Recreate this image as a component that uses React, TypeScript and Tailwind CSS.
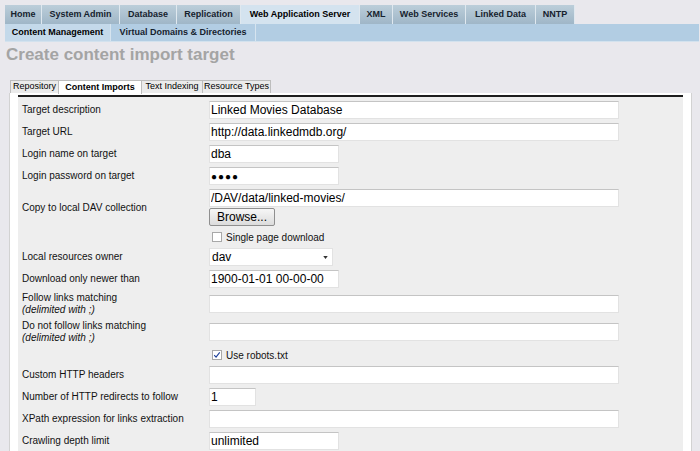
import { ReactNode } from 'react';

// ==========================================
// NAV DATA
// ==========================================

const topTabs = [
  { label: 'Home', w: 'w-[37px]' },
  { label: 'System Admin', w: 'w-[78px]' },
  { label: 'Database', w: 'w-[57px]' },
  { label: 'Replication', w: 'w-[64px]' },
  { label: 'Web Application Server', w: 'w-[119px]', active: true },
  { label: 'XML', w: 'w-[33px]' },
  { label: 'Web Services', w: 'w-[73px]' },
  { label: 'Linked Data', w: 'w-[70px]' },
  { label: 'NNTP', w: 'w-[39px]' },
];

const innerTabs = [
  { label: 'Repository', w: 'w-[49px]' },
  { label: 'Content Imports', w: 'w-[84px]', active: true },
  { label: 'Text Indexing', w: 'w-[62px]' },
  { label: 'Resource Types', w: 'w-[69px]' },
];

// ==========================================
// FORM PIECES
// ==========================================

function Row({ label, h = 'h-[18px]', children }: { label?: ReactNode; h?: string; children: ReactNode }) {
  return (
    <div className={`flex items-center ${h}`}>
      <div className="w-[191px] pl-[4px] text-[10px] leading-[12px] text-[#111]">{label}</div>
      <div className="flex-1 flex flex-col">{children}</div>
    </div>
  );
}

function Field({ value = '', w = 'w-[410px]', small }: { value?: string; w?: string; small?: boolean }) {
  return (
    <input
      type="text"
      defaultValue={value}
      className={`${w} h-[18px] bg-white border border-[#e2e2e2] border-t-[#c4c4c4] px-[1px] ${
        small ? 'text-[10px] tracking-[1px]' : 'text-[12px]'
      } leading-[16px] text-black outline-none`}
    />
  );
}

function Check({ checked, label }: { checked?: boolean; label: string }) {
  return (
    <div className="flex items-center pl-[3px]">
      <span className="w-[10px] h-[10px] border border-[#a8a8a8] bg-white flex items-center justify-center">
        {checked && (
          <svg viewBox="0 0 10 10" className="w-[8px] h-[8px]">
            <path d="M1.5 5.2 L3.8 7.6 L8.4 1.8" fill="none" stroke="#1c3f9a" strokeWidth={1.4} />
          </svg>
        )}
      </span>
      <span className="ml-[4px] text-[10px] text-[#111]">{label}</span>
    </div>
  );
}

function Delimited({ title }: { title: string }) {
  return (
    <>
      {title}
      <br />
      <i>(delimited with ;)</i>
    </>
  );
}

export default function App() {
  return (
    <div className="min-h-screen bg-[#e9e8ed] font-['Liberation_Sans',Arial,sans-serif] overflow-hidden">
      {/* Top navigation */}
      <div className="flex pt-[5px] pl-[5px] h-[24px]">
        {topTabs.map((t) => (
          <div
            key={t.label}
            className={`${t.w} h-[19px] flex items-center justify-center text-[9px] font-bold border-r border-[#dfe8ef] ${
              t.active
                ? 'bg-[#d4e3ef] text-black'
                : 'bg-gradient-to-b from-[#bcceda] to-[#9fb6c7] text-[#16222e]'
            }`}
          >
            {t.label}
          </div>
        ))}
      </div>

      {/* Sub navigation */}
      <div className="ml-[5px] w-[694px] h-[18px] flex bg-[#b2cde3] border-b border-[#d3e2ee]">
        <div className="w-[106px] flex items-center justify-center text-[9px] font-bold text-black bg-[#c4d9ea] border-r border-[#d6e4ef]">
          Content Management
        </div>
        <div className="w-[145px] flex items-center justify-center text-[9px] font-bold text-[#16222e] border-r border-[#d6e4ef]">
          Virtual Domains &amp; Directories
        </div>
      </div>

      {/* Title */}
      <h1 className="mt-[3px] pl-[6px] text-[17px] leading-[20px] font-bold text-[#a4a4a4]">
        Create content import target
      </h1>

      {/* Inner tabs */}
      <div className="mt-[15px] ml-[10px] flex h-[13px]">
        {innerTabs.map((t) => (
          <div
            key={t.label}
            className={`${t.w} flex items-center justify-center text-[9px] text-black border border-b-0 border-[#bdbdbd] -mr-[1px] ${
              t.active ? 'bg-white font-bold h-[14px]' : 'bg-[#ebebeb] h-[13px]'
            }`}
          >
            {t.label}
          </div>
        ))}
      </div>

      {/* Panel */}
      <div className="ml-[9px] w-[683px] bg-white border-x border-[#d2d2d2] pt-[2px]">
        <div className="mx-[8px] bg-[#eeeeee] border-t-2 border-[#1e1e1e] pt-[4px] pb-[20px] flex flex-col gap-[4px]">
          <Row label="Target description">
            <Field value="Linked Movies Database" />
          </Row>
          <Row label="Target URL">
            <Field value="http://data.linkedmdb.org/" />
          </Row>
          <Row label="Login name on target">
            <Field value="dba" w="w-[130px]" />
          </Row>
          <Row label="Login password on target">
            <Field value="●●●●" w="w-[130px]" small />
          </Row>
          <Row label="Copy to local DAV collection" h="h-[37px]">
            <Field value="/DAV/data/linked-movies/" />
            <button className="mt-[1px] w-[66px] h-[18px] rounded-[2px] border border-[#8f8f8f] bg-gradient-to-b from-[#f6f6f6] to-[#dcdcdc] text-[12px] leading-[16px] text-black">
              Browse...
            </button>
          </Row>
          <Row h="h-[14px]">
            <Check label="Single page download" />
          </Row>
          <Row label="Local resources owner">
            <div className="w-[124px] h-[18px] bg-white border border-[#e2e2e2] flex items-center justify-between pl-[2px] pr-[4px]">
              <span className="text-[12px] leading-[16px] text-black">dav</span>
              <svg viewBox="0 0 6 4" className="w-[5px] h-[3px]">
                <path d="M0 0 L6 0 L3 4 Z" fill="#333" />
              </svg>
            </div>
          </Row>
          <Row label="Download only newer than">
            <Field value="1900-01-01 00-00-00" w="w-[130px]" />
          </Row>
          <Row label={<Delimited title="Follow links matching" />} h="h-[24px]">
            <Field />
          </Row>
          <Row label={<Delimited title="Do not follow links matching" />} h="h-[24px]">
            <Field />
          </Row>
          <Row h="h-[14px]">
            <Check checked label="Use robots.txt" />
          </Row>
          <Row label="Custom HTTP headers">
            <Field />
          </Row>
          <Row label="Number of HTTP redirects to follow">
            <Field value="1" w="w-[47px]" />
          </Row>
          <Row label="XPath expression for links extraction">
            <Field />
          </Row>
          <Row label="Crawling depth limit">
            <Field value="unlimited" w="w-[130px]" />
          </Row>
        </div>
      </div>
    </div>
  );
}
